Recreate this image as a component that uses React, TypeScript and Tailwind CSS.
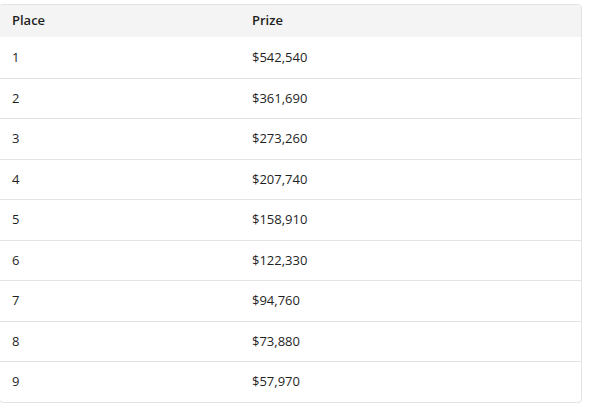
import React from "react";

const prizes = [
  ["1", "$542,540"],
  ["2", "$361,690"],
  ["3", "$273,260"],
  ["4", "$207,740"],
  ["5", "$158,910"],
  ["6", "$122,330"],
  ["7", "$94,760"],
  ["8", "$73,880"],
  ["9", "$57,970"],
];

const App = () => {
  return (
    <div className="w-[589px] h-[408px] bg-white pt-1 font-['Open_Sans',sans-serif] text-[13px] text-[#1f1f1f]">
      <div className="ml-[-1px] w-[583px] rounded border border-[#e3e3e3] overflow-hidden">
        <div className="flex h-[32px] items-center bg-[#f4f4f4] font-semibold">
          <div className="w-[252px] pl-[12px]">Place</div>
          <div className="flex-1">Prize</div>
        </div>
        {prizes.map(([place, prize], i) => (
          <div
            key={place}
            className={
              i === 0
                ? "flex h-[40.5px] items-center"
                : "flex h-[40.5px] items-center border-t border-[#e3e3e3]"
            }
          >
            <div className="w-[252px] pl-[12px]">{place}</div>
            <div className="flex-1">{prize}</div>
          </div>
        ))}
      </div>
    </div>
  );
};

export default App;
